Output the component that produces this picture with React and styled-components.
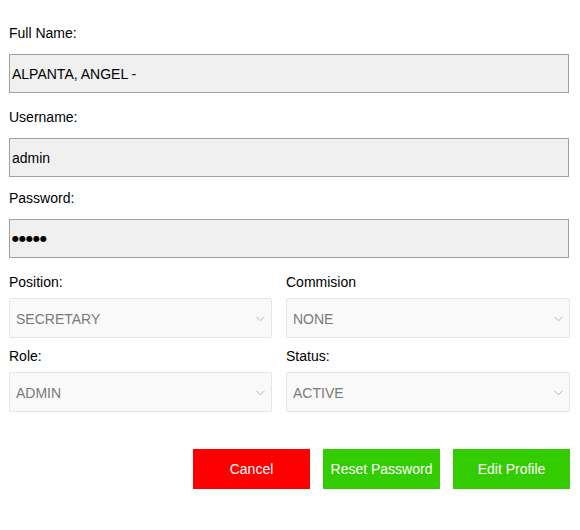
import React from 'react';
import styled, { createGlobalStyle } from 'styled-components';

const GlobalStyle = createGlobalStyle`
  body {
    margin: 0;
    background: #ffffff;
    font-family: "Liberation Sans", Arial, sans-serif;
  }
`;

function App() {
  return (
    <>
      <GlobalStyle />
      <Page>
        <Field top={24}>
          <Label>Full Name:</Label>
          <TextBox>ALPANTA, ANGEL -</TextBox>
        </Field>
        <Field top={15}>
          <Label>Username:</Label>
          <TextBox>admin</TextBox>
        </Field>
        <Field top={12}>
          <Label>Password:</Label>
          <TextBox>
            <Dots>●●●●●</Dots>
          </TextBox>
        </Field>
        <SelectRow top={15}>
          <SelectField>
            <Label>Position:</Label>
            <Select value="SECRETARY" />
          </SelectField>
          <SelectField>
            <Label>Commision</Label>
            <Select value="NONE" />
          </SelectField>
        </SelectRow>
        <SelectRow top={9}>
          <SelectField>
            <Label>Role:</Label>
            <Select value="ADMIN" />
          </SelectField>
          <SelectField>
            <Label>Status:</Label>
            <Select value="ACTIVE" />
          </SelectField>
        </SelectRow>
        <ButtonBar>
          <Button color="#ff0000">Cancel</Button>
          <Button color="#33cc00">Reset Password</Button>
          <Button color="#33cc00">Edit Profile</Button>
        </ButtonBar>
      </Page>
    </>
  );
}

const Select = ({ value }) => (
  <SelectBox>
    <span>{value}</span>
    <svg width="9" height="6" viewBox="0 0 9 6">
      <path d="M0.5 0.8 L4.5 4.8 L8.5 0.8" fill="none" stroke="#b4b4b4" strokeWidth="1" />
    </svg>
  </SelectBox>
);

export default App;

const Page = styled.div`
  width: 561px;
  padding-left: 9px;
  display: flex;
  flex-direction: column;
`;

const Field = styled.div`
  display: flex;
  flex-direction: column;
  gap: 12px;
  margin-top: ${p => p.top}px;
`;

const Label = styled.div`
  height: 18px;
  line-height: 18px;
  font-size: 14px;
  color: #000000;
`;

const TextBox = styled.div`
  box-sizing: border-box;
  width: 560px;
  height: 39px;
  border: 1px solid #a0a0a0;
  background: #f0f0f0;
  padding-left: 2px;
  display: flex;
  align-items: center;
  font-size: 14px;
  color: #000000;
`;

const Dots = styled.span`
  font-family: "DejaVu Sans", sans-serif;
  font-size: 8px;
  letter-spacing: 0px;
`;

const SelectRow = styled.div`
  display: grid;
  grid-template-columns: 263px 284px;
  column-gap: 14px;
  margin-top: ${p => p.top}px;
`;

const SelectField = styled.div`
  display: flex;
  flex-direction: column;
  gap: 7px;
`;

const SelectBox = styled.div`
  box-sizing: border-box;
  height: 40px;
  border: 1px solid #e6e6e6;
  border-radius: 2px;
  background: #f9f9f9;
  padding: 1px 6px 0 6px;
  display: flex;
  align-items: center;
  justify-content: space-between;
  font-size: 14px;
  color: #7a7a7a;
`;

const ButtonBar = styled.div`
  display: flex;
  justify-content: flex-end;
  gap: 13px;
  margin-top: 37px;
`;

const Button = styled.button`
  width: 117px;
  height: 40px;
  border: none;
  background: ${p => p.color};
  color: #ffffff;
  font-family: "Liberation Sans", Arial, sans-serif;
  font-size: 14px;
  padding: 0;
  cursor: pointer;
`;
